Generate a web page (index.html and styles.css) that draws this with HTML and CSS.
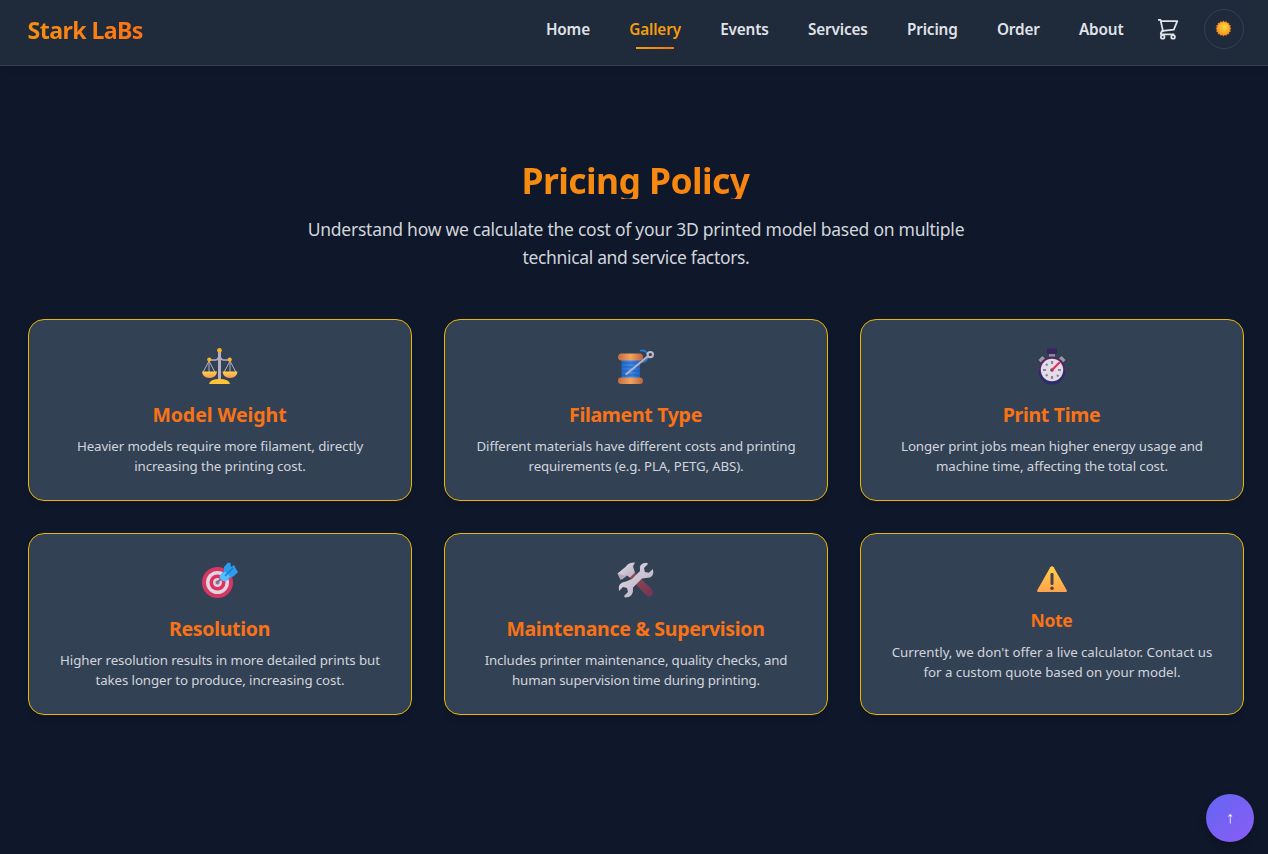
FILE: index.html
```html
<!DOCTYPE html>
<html lang="en">
<head>
<meta charset="utf-8">
<title>Stark LaBs - Pricing Policy</title>
<link rel="stylesheet" href="styles.css">
</head>
<body>
<header class="header">
  <div class="logo">Stark LaBs</div>
  <nav class="nav">
    <a class="link">Home</a>
    <a class="link active">Gallery</a>
    <a class="link">Events</a>
    <a class="link">Services</a>
    <a class="link">Pricing</a>
    <a class="link">Order</a>
    <a class="link">About</a>
  </nav>
  <svg class="cart" viewBox="0 0 22 22" fill="none" stroke="currentColor" stroke-width="1.8" stroke-linejoin="round">
    <path d="M1 1.9h2.5l2.7 12.2M3.7 3.1h16.6l-3.5 8.5L5.6 12.8M5.3 12.3 3.8 15.4q-.2.9.8.9h12.6"/>
    <circle cx="5.7" cy="18.9" r="1.8"/><circle cx="16.1" cy="18.9" r="1.8"/>
  </svg>
  <button class="theme" aria-label="Toggle theme">
    <svg class="sun" viewBox="0 0 18 18">
      <defs><radialGradient id="sun" cx=".6" cy=".35" r=".7"><stop offset="0" stop-color="#ffd83d"/><stop offset="1" stop-color="#f59b22"/></radialGradient></defs>
      <path fill="#f58220" d="M9 .6 10.4 2 12.2 1.3 13 3 15 3.1 15 5 16.8 5.9 16 7.6 17.4 9 16 10.4 16.8 12.1 15 13 15 15 13 15 12.2 16.8 10.4 16 9 17.4 7.6 16 5.8 16.8 5 15 3 15 3 13 1.2 12.1 2 10.4.6 9 2 7.6 1.2 5.9 3 5 3 3.1 5 3 5.8 1.3 7.6 2z"/>
      <circle cx="9" cy="9" r="6.5" fill="url(#sun)"/>
    </svg>
  </button>
</header>

<main class="main">
  <h1 class="title">Pricing Policy</h1>
  <p class="intro">Understand how we calculate the cost of your 3D printed model based on multiple<br><span class="intro-end">technical and service factors.</span></p>

  <section class="grid">
    <article class="card">
      <svg class="icon" viewBox="0 0 36 36">
        <defs><linearGradient id="gold" x2="0" y2="1"><stop stop-color="#ffd43a"/><stop offset="1" stop-color="#f79763"/></linearGradient></defs>
        <g fill="none" stroke="#b9adc4"><path d="M7 13 1.2 24M7 13l5.8 11M7 13v11M28 13l-5.8 11M28 13l5.8 11M28 13v11" stroke-width="1"/><path d="M7.5 12h6.3q2.8-.5 3.7-5 .9 4.500 3.700 5h6.300" stroke-width="1.700"/><path d="M17.500 3v29" stroke-width="3"/></g>
        <path d="M0 23.500h15q-.5 6.500-7.500 6.500T0 23.500M20.500 23.500h15q-.5 6.500-7.500 6.500t-7.500-6.500" fill="url(#gold)"/>
        <path d="M7 36q1-5 10.500-5T28 36z" fill="#ffc233"/>
        <circle cx="17.500" cy="2.300" r="2.300" fill="#fbb51f"/><circle cx="7.300" cy="11.600" r="2.100" fill="#fbb51f"/><circle cx="27.700" cy="11.600" r="2.100" fill="#fbb51f"/>
      </svg>
      <h2 class="name wide">Model Weight</h2>
      <p class="text">Heavier models require more filament, directly<br>increasing the printing cost.</p>
    </article>

    <article class="card">
      <svg class="icon" viewBox="0 0 36 36">
        <defs><linearGradient id="wood"><stop stop-color="#c36b43"/><stop offset=".5" stop-color="#f2a45d"/><stop offset="1" stop-color="#b96442"/></linearGradient><linearGradient id="blue"><stop stop-color="#2467c4"/><stop offset=".5" stop-color="#378df0"/><stop offset="1" stop-color="#2060c0"/></linearGradient></defs>
        <path d="M22 2.800q4-1.500 6.500 1.500 3 4 0 7.700-2.500 3-5 1" fill="none" stroke="#267bd5" stroke-width="1.700"/>
        <path d="M3.500 7h18.500v23H3.500z" fill="url(#blue)"/>
        <path d="M3.500 15h18.500M3.500 19h18.500M3.500 23h18.500M3.500 27h18.500" stroke="#2459ab" stroke-width=".8"/>
        <rect x="0" y="5.500" width="25" height="7" rx="3.500" fill="url(#wood)"/><rect x="0" y="29.500" width="25" height="6.500" rx="3.200" fill="url(#wood)"/>
        <path d="M8.500 26 29.500 8.500" stroke="#b8afc4" stroke-width="2.200" stroke-linecap="round"/><circle cx="32.300" cy="6.600" r="2.700" fill="none" stroke="#c2b9cb" stroke-width="2"/>
      </svg>
      <h2 class="name">Filament Type</h2>
      <p class="text">Different materials have different costs and printing<br><span class="snug">requirements (e.g. PLA, PETG, ABS).</span></p>
    </article>

    <article class="card">
      <svg class="icon" viewBox="0 0 36 36">
        <path d="M4.500 12 8.500 8l3 3-4 4zM24.500 11l3-3 4 4-3 3z" fill="#9c98a5"/>
        <path d="M15 4h6v6h-6z" fill="#8b8994"/><rect x="13" y=".5" width="10" height="5.500" rx="1.500" fill="#3d2260"/>
        <circle cx="18" cy="22" r="13.500" fill="#50285f"/><path d="M4.500 23a13.500 13.500 0 0 0 27 0" fill="#2e2c68"/><circle cx="18" cy="22" r="11.200" fill="#e3dce9"/>
        <path d="M18 13v3M18 28v3M9 22h3M24 22h3M12 16l1.500 1.500M12 28l1.500-1.500M23 27l1.500 1.500" stroke="#8d8596" stroke-width="2.200"/>
        <circle cx="18" cy="22" r="1.800" fill="#554464"/><path d="m18.500 21.500 6.500-6.500" stroke="#f02b59" stroke-width="2.200" stroke-linecap="round"/>
      </svg>
      <h2 class="name">Print Time</h2>
      <p class="text">Longer print jobs mean higher energy usage and<br>machine time, affecting the total cost.</p>
    </article>

    <article class="card">
      <svg class="icon" viewBox="0 0 36 36">
        <circle cx="15.500" cy="20.500" r="15.500" fill="#d63864"/><circle cx="15.500" cy="20.500" r="11.500" fill="#e1d5e3"/><circle cx="15.500" cy="20.500" r="8" fill="#e22f5d"/><circle cx="15.500" cy="20.500" r="4.500" fill="#ddd0df"/><circle cx="15.500" cy="20.500" r="2" fill="#85778f"/>
        <path d="m15.500 20 7-6" stroke="#777483" stroke-width="2"/>
        <path d="m17.500 14 4.500-5 0-4 4-4.500 2.500.5.500 4 3-2 1.500 3 2.500 4-4 4-4 2-4 3q-4 1-6.500-5" fill="#2c9ded"/><path d="m17.500 14 5.500-4.500 5 5-4 4.500q-5 1-6.500-5" fill="#54c0ff"/><path d="m23 14 8-8" stroke="#1977cb" stroke-width="1.200"/>
      </svg>
      <h2 class="name">Resolution</h2>
      <p class="text">Higher resolution results in more detailed prints but<br>takes longer to produce, increasing cost.</p>
    </article>

    <article class="card">
      <svg class="icon" viewBox="0 0 36 36">
        <defs><linearGradient id="handle" x2="1" y2="1"><stop stop-color="#8b5550"/><stop offset="1" stop-color="#7b2f55"/></linearGradient><linearGradient id="metal" x2="1" y2="1"><stop stop-color="#e4dce9"/><stop offset="1" stop-color="#b5aabf"/></linearGradient></defs>
        <path d="m10 14 5-5 18.500 18q3 4 0 6.500t-6-1z" fill="url(#handle)"/>
        <path d="M-.5 11.500 8 4.500q2-4 9-4l-2 4 2 6-5 5-3-2-5 4z" fill="url(#metal)"/><path d="m-.5 11.500 3 6.500 5.500-4" fill="#b3a8bb"/>
        <path d="m14 17 8-8Q20 1 29 .8l1 1.200-4 4 .8 4 4 .8L35 7q2 9-7 9l-4 .5-9 9q1 10-8 10l-1-1.500 4-4-1-4-4-1-4 4q-2-8.500 7-9.500z" fill="url(#metal)"/>
      </svg>
      <h2 class="name">Maintenance &amp; Supervision</h2>
      <p class="text snug">Includes printer maintenance, quality checks, and<br>human supervision time during printing.</p>
    </article>

    <article class="card note">
      <svg class="icon" viewBox="0 0 30 27">
        <defs><linearGradient id="warn" x2="0" y2="1"><stop stop-color="#ffd047"/><stop offset="1" stop-color="#ffa34d"/></linearGradient></defs>
        <path d="M13.300 1.300Q15-.8 16.700 1.300L29.600 24q1 2-1.300 2H1.700Q-.6 26 .4 24z" fill="url(#warn)"/>
        <rect x="13.500" y="7" width="3" height="12" rx="1.300" fill="#4a4048"/><circle cx="15" cy="22.300" r="1.700" fill="#4a4048"/>
      </svg>
      <h2 class="name">Note</h2>
      <p class="text loose">Currently, we don't offer a live calculator. Contact us<br>for a custom quote based on your model.</p>
    </article>
  </section>
</main>
<button class="top" aria-label="Back to top">↑</button>
</body>
</html>
```
FILE: styles.css
```css
* { box-sizing: border-box; margin: 0; padding: 0; }
body { background: #0f172a; color: #d1d5db; font-family: "Noto Sans", "Open Sans", sans-serif; height: 854px; overflow: hidden; }
.header { height: 66px; display: flex; align-items: center; padding: 0 24px 8px 27.500px; background: #1f2a3b; border-bottom: 1px solid #334155; box-shadow: 0 2px 6px rgba(0,0,0,.12); }
.logo { font-size: 23.200px; font-weight: 700; line-height: 32px; padding-top: 3px; letter-spacing: -.6px; color: transparent; background: linear-gradient(90deg, #f98e12, #f97316); background-clip: text; -webkit-background-clip: text; }
.nav { margin-left: auto; display: flex; gap: 39.300px; }
.link { position: relative; font-size: 15.300px; font-weight: 600; line-height: 24px; padding-top: 1px; white-space: nowrap; color: #e0e3e8; letter-spacing: -.15px; }
.active { color: #f59e0b; }
.active::after { content: ""; position: absolute; left: 50%; margin-left: -19px; bottom: -8px; width: 38px; height: 2px; background: linear-gradient(90deg, #f59e0b, #f97316); }
.cart { width: 22px; height: 22px; margin: 0 25px 0 33.500px; color: #e0e3e8; }
.theme { width: 40px; height: 40px; display: flex; align-items: center; justify-content: center; border: 1px solid #334155; border-radius: 50%; background: transparent; }
.sun { width: 17px; height: 17px; margin-right: 1px; }
.main { padding: 93px 24px 0 28px; text-align: center; }
.title { height: 40px; padding: 2px 1px 0 0; font-size: 35.500px; line-height: 38px; font-weight: 700; letter-spacing: -.6px; color: transparent; background: linear-gradient(90deg, #f59e0b, #f97316); background-clip: text; -webkit-background-clip: text; }
.intro { margin-top: 16px; font-size: 17.500px; line-height: 28px; white-space: nowrap; letter-spacing: -.25px; }
.intro-end { letter-spacing: -.34px; }
.grid { margin-top: 48px; display: grid; grid-template-columns: repeat(3, 1fr); gap: 32px; }
.card { height: 182px; padding: 28px 15px 0; border: 1px solid #eab308; border-radius: 16px; background: #334155; box-shadow: 0 4px 6px rgba(0,0,0,.08); }
.icon { display: block; width: 36px; height: 36px; margin: 0 auto 16px; position: relative; left: -.5px; overflow: visible; }
.name { padding: 1px 1px 0 0; height: 28px; font-size: 19.500px; line-height: 28px; font-weight: 700; color: #f97316; letter-spacing: -.3px; }
.wide { letter-spacing: -.05px; }
.text { margin-top: 8px; font-size: 13.300px; line-height: 20px; white-space: nowrap; letter-spacing: -.1px; }
.snug { letter-spacing: -.15px; }
.loose { letter-spacing: -.04px; }
.note { padding-top: 32px; }
.note .icon { width: 30px; height: 27px; margin-bottom: 13px; }
.note .name { padding-top: 0; font-size: 17.500px; }
.top { position: fixed; right: 14px; bottom: 12px; width: 48px; height: 48px; border: 0; border-radius: 50%; background: linear-gradient(135deg, #6366f1, #8b5cf6); color: #fff; font: bold 16px "Liberation Sans", sans-serif; box-shadow: 0 4px 8px rgba(0,0,0,.2); }
```
